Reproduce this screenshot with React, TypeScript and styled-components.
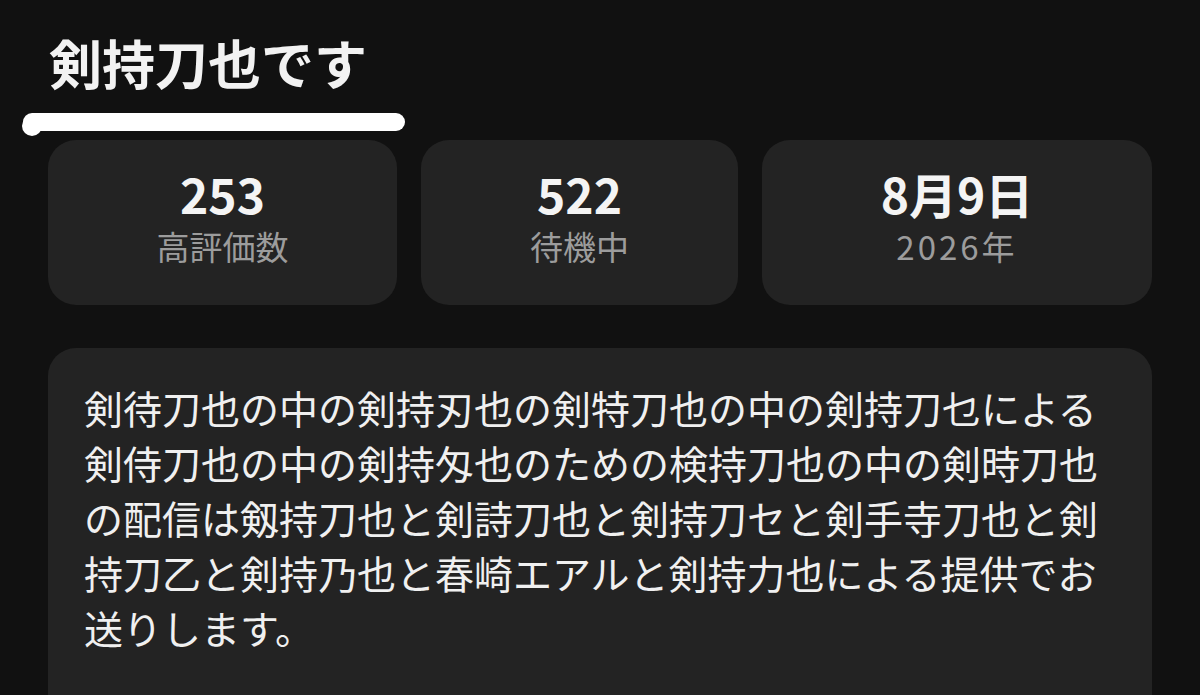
import { createGlobalStyle, styled } from "styled-components";

const GlobalStyle = createGlobalStyle`
  html, body {
    margin: 0;
    padding: 0;
    background: #111111;
    overflow: hidden;
  }
  body {
    font-family: "Noto Sans CJK JP", "Noto Sans", sans-serif;
    color: #f2f2f2;
  }
`;

type Stat = {
  value: string;
  label: string;
  wide?: boolean;
};

const stats: Stat[] = [
  { value: "253", label: "高評価数" },
  { value: "522", label: "待機中" },
  { value: "8月9日", label: "2026年", wide: true },
];

const App = () => {
  return (
    <>
      <GlobalStyle />
      <Page>
        <Header>
          <Title>剣持刀也です</Title>
          <Underline viewBox="0 0 384 28" aria-hidden="true">
            <rect x="1" y="3" width="382" height="18" rx="9" fill="#ffffff" />
            <circle cx="10" cy="16" r="10" fill="#ffffff" />
          </Underline>
        </Header>

        <StatRow>
          {stats.map((s) => (
            <StatCard key={s.label}>
              <StatValue>{s.value}</StatValue>
              <StatLabel $wide={s.wide}>{s.label}</StatLabel>
            </StatCard>
          ))}
        </StatRow>

        <Description>
          <p>
            剣待刀也の中の剣持刃也の剣特刀也の中の剣持刀乜による剣侍刀也の中の剣持匁也のための検持刀也の中の剣時刀也の配信は剱持刀也と剣詩刀也と剣持刀セと剣手寺刀也と剣持刀乙と剣持乃也と春崎エアルと剣持力也による提供でお送りします。
          </p>
        </Description>
      </Page>
    </>
  );
};

export default App;

const Page = styled.div`
  width: 1104px;
  padding: 30px 48px 0;
`;

const Header = styled.header`
  display: flex;
  flex-direction: column;
`;

const Title = styled.h1`
  margin: 0 0 0 1px;
  font-size: 53px;
  line-height: 64px;
  font-weight: 700;
  color: #f2f2f2;
`;

const Underline = styled.svg`
  display: block;
  width: 384px;
  height: 28px;
  margin: 16px 0 0 -26px;
`;

const StatRow = styled.section`
  display: grid;
  grid-template-columns: 349px 317px 390px;
  gap: 24px;
  margin-top: 2px;
`;

const StatCard = styled.div`
  display: flex;
  flex-direction: column;
  align-items: center;
  height: 165px;
  padding-top: 28px;
  box-sizing: border-box;
  background: #232323;
  border-radius: 28px;
`;

const StatValue = styled.div`
  font-size: 48px;
  line-height: 50px;
  font-weight: 700;
  color: #f4f4f4;
`;

const StatLabel = styled.div<{ $wide?: boolean }>`
  margin-top: 10px;
  font-size: 33px;
  line-height: 36px;
  font-weight: 400;
  letter-spacing: ${(p) => (p.$wide ? "3px" : "0")};
  color: #9c9c9c;
`;

const Description = styled.section`
  margin-top: 43px;
  padding: 32px 36px 120px;
  background: #232323;
  border-radius: 28px;

  p {
    margin: 0;
    font-size: 39px;
    line-height: 55px;
    font-weight: 400;
    color: #f0f0f0;
  }
`;
